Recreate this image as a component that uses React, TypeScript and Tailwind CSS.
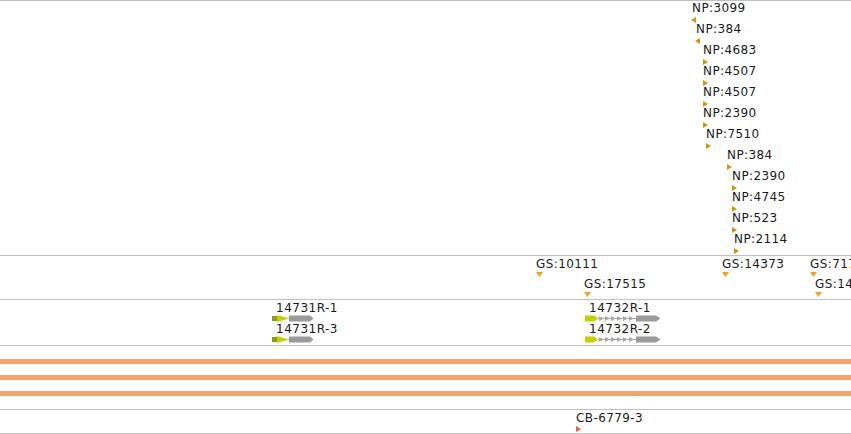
import React from 'react';

type Dir = 'left' | 'right' | 'down';

interface Feature {
  label: string;
  x: number;
  y: number;
  dir: Dir;
}

const npFeatures: Feature[] = [
  { label: 'NP:3099', x: 692, y: 0, dir: 'left' },
  { label: 'NP:384', x: 696, y: 21, dir: 'left' },
  { label: 'NP:4683', x: 703, y: 42, dir: 'right' },
  { label: 'NP:4507', x: 703, y: 63, dir: 'right' },
  { label: 'NP:4507', x: 703, y: 84, dir: 'right' },
  { label: 'NP:2390', x: 703, y: 105, dir: 'right' },
  { label: 'NP:7510', x: 706, y: 126, dir: 'right' },
  { label: 'NP:384', x: 727, y: 147, dir: 'right' },
  { label: 'NP:2390', x: 732, y: 168, dir: 'right' },
  { label: 'NP:4745', x: 732, y: 189, dir: 'right' },
  { label: 'NP:523', x: 732, y: 210, dir: 'right' },
  { label: 'NP:2114', x: 734, y: 231, dir: 'right' },
];

const gsFeatures: Feature[] = [
  { label: 'GS:10111', x: 536, y: 1, dir: 'down' },
  { label: 'GS:17515', x: 584, y: 21, dir: 'down' },
  { label: 'GS:14373', x: 722, y: 1, dir: 'down' },
  { label: 'GS:717', x: 810, y: 1, dir: 'down' },
  { label: 'GS:14', x: 815, y: 21, dir: 'down' },
];

const Marker = ({ dir, color }: { dir: Dir; color: string }) => {
  if (dir === 'down') {
    return (
      <svg width="7" height="5" viewBox="0 0 7 5" className="block">
        <polygon points="0,0 7,0 3.5,5" fill={color} />
      </svg>
    );
  }
  return (
    <svg width="5" height="6" viewBox="0 0 5 6" className="block">
      {dir === 'left' ? (
        <polygon points="5,0 5,6 0,3" fill={color} />
      ) : (
        <polygon points="0,0 5,3 0,6" fill={color} />
      )}
    </svg>
  );
};

const FeatureMark = ({ f, color, offset }: { f: Feature; color: string; offset: number }) => (
  <div className="absolute" style={{ left: f.x - (f.dir === 'left' ? 1 : 0), top: f.y }}>
    <div
      className="text-[12px] leading-[14px] tracking-[0.4px] text-[#1a1a1a] whitespace-nowrap"
      style={{ marginLeft: f.dir === 'left' ? 1 : 0 }}
    >
      {f.label}
    </div>
    <div style={{ marginTop: offset }}>
      <Marker dir={f.dir} color={color} />
    </div>
  </div>
);

const Divider = () => <div className="h-px bg-[#c0c0c0] shrink-0" />;

// short transcript: stub, start arrow, solid gray body
const ShortGene = () => (
  <svg width="42" height="7" viewBox="0 0 42 7" className="block">
    <rect x="0" y="1" width="5" height="5" fill="#8f9a1e" />
    <polygon points="5,0 17,3.5 5,7" fill="#c4d000" />
    <rect x="5" y="3" width="12" height="1" fill="#c4d000" />
    <polygon points="17,0.5 38,0.5 41.5,3.5 38,6.5 17,6.5" fill="#9a9a9a" />
  </svg>
);

// longer transcript with intron chevrons
const LongGene = () => (
  <svg width="76" height="7" viewBox="0 0 76 7" className="block">
    <rect x="0" y="0.5" width="9" height="6" fill="#c4d000" />
    <polygon points="9,0.5 13,3.5 9,6.5" fill="#c4d000" />
    <rect x="13" y="3" width="38" height="1" fill="#a0a0a0" />
    {[14, 20, 26, 32, 38, 44].map((cx) => (
      <polygon key={cx} points={`${cx},1 ${cx + 5},3.5 ${cx},6`} fill="#a8a8a8" />
    ))}
    <polygon points="51,0.5 71,0.5 75.5,3.5 71,6.5 51,6.5" fill="#9a9a9a" />
  </svg>
);

const GeneMark = ({ label, x, y, long }: { label: string; x: number; y: number; long?: boolean }) => (
  <div className="absolute" style={{ left: x, top: y }}>
    <div className="pl-1 text-[12px] leading-[14px] tracking-[0.5px] text-[#1a1a1a] whitespace-nowrap">
      {label}
    </div>
    <div>{long ? <LongGene /> : <ShortGene />}</div>
  </div>
);

export default function App() {
  return (
    <div
      className="w-[851px] h-[434px] overflow-hidden bg-white flex flex-col"
      style={{ fontFamily: '"DejaVu Sans", "Liberation Sans", sans-serif' }}
    >
      <Divider />
      <div className="relative h-[254px] shrink-0">
        {npFeatures.map((f, i) => (
          <FeatureMark key={i} f={f} color="#d4940c" offset={2} />
        ))}
      </div>
      <Divider />
      <div className="relative h-[43px] shrink-0">
        {gsFeatures.map((f, i) => (
          <FeatureMark key={i} f={f} color="#f0a224" offset={1} />
        ))}
      </div>
      <Divider />
      <div className="relative h-[45px] shrink-0">
        <GeneMark label="14731R-1" x={272} y={1} />
        <GeneMark label="14731R-3" x={272} y={22} />
        <GeneMark label="14732R-1" x={585} y={1} long />
        <GeneMark label="14732R-2" x={585} y={22} long />
      </div>
      <Divider />
      <div className="h-[63px] shrink-0 flex flex-col gap-[11px] pt-[13px]">
        <div className="h-[5px] bg-[#f3a36f]" />
        <div className="h-[5px] bg-[#f3a36f]" />
        <div className="h-[5px] bg-[#f3a36f]" />
      </div>
      <Divider />
      <div className="relative h-[23px] shrink-0">
        <FeatureMark f={{ label: 'CB-6779-3', x: 576, y: 1, dir: 'right' }} color="#f2603c" offset={1} />
      </div>
      <Divider />
    </div>
  );
}
